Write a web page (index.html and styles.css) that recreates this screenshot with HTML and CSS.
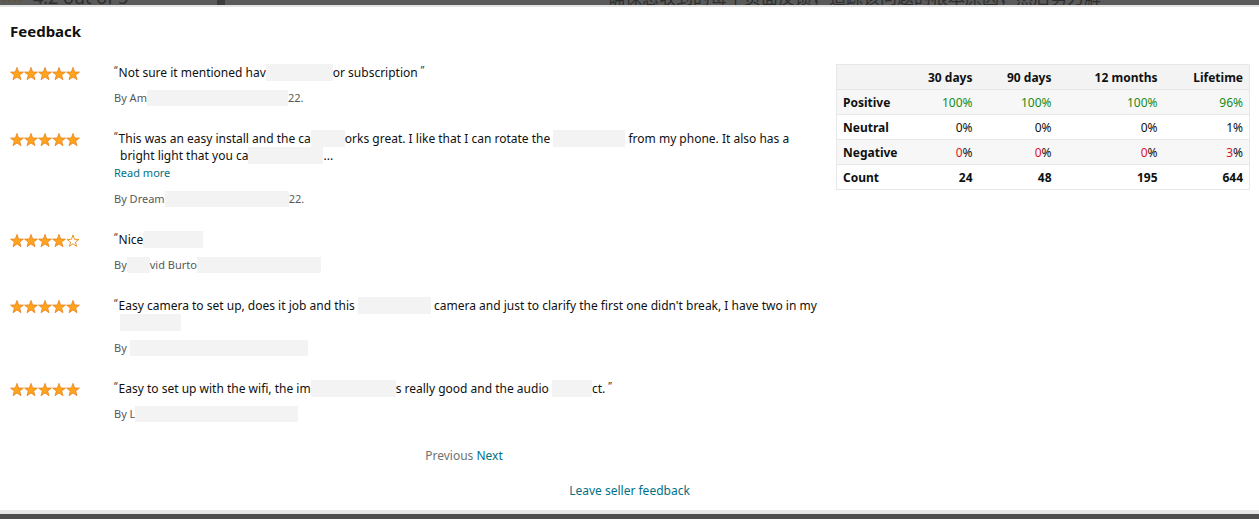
FILE: index.html
```html
<!DOCTYPE html>
<html lang="en">
<head>
<meta charset="utf-8">
<title>Feedback</title>
<link rel="stylesheet" href="styles.css">
</head>
<body>
<svg class="defs" width="0" height="0" aria-hidden="true">
  <defs>
    <symbol id="star-full" viewBox="0 0 14 13">
      <polygon points="7,0.4 8.65,4.93 13.47,5.1 9.66,8.07 11,12.7 7,10 3,12.7 4.34,8.07 0.53,5.1 5.35,4.93" fill="#ffa41c" stroke="#e47911" stroke-width="0.7" stroke-linejoin="round"/>
    </symbol>
    <symbol id="star-empty" viewBox="0 0 14 13">
      <polygon points="7,0.9 8.5,5.3 13,5.45 9.35,8.15 10.6,12.3 7,9.75 3.4,12.3 4.65,8.15 1,5.45 5.5,5.3" fill="#fff" stroke="#e88a14" stroke-width="0.9" stroke-linejoin="round"/>
    </symbol>
  </defs>
</svg>

<div class="bg-top">
  <div class="bg-top-inner">
    <span class="bg-stars">★★</span>
    <span class="bg-rating">4.2 out of 5</span>
    <span class="bg-box"></span>
    <span class="bg-cn">确保您收到的每个页面反馈，追踪该问题的根本原因，然后努力解</span>
  </div>
</div>

<div class="modal">
  <h2 class="title">Feedback</h2>
  <div class="content">
    <div class="reviews">
      <div class="review">
        <div class="stars">
          <svg width="70" height="13" viewBox="0 0 70 13"><use href="#star-full" x="0" width="14" height="13"/><use href="#star-full" x="14" width="14" height="13"/><use href="#star-full" x="28" width="14" height="13"/><use href="#star-full" x="42" width="14" height="13"/><use href="#star-full" x="56" width="14" height="13"/></svg>
        </div>
        <div class="body">
          <p class="text"><span class="q">“</span>Not sure it mentioned hav<span class="blur w67"></span>or subscription <span class="q">”</span></p>
          <p class="by">By Am<span class="blur w141"></span>22.</p>
        </div>
      </div>

      <div class="review">
        <div class="stars">
          <svg width="70" height="13" viewBox="0 0 70 13"><use href="#star-full" x="0" width="14" height="13"/><use href="#star-full" x="14" width="14" height="13"/><use href="#star-full" x="28" width="14" height="13"/><use href="#star-full" x="42" width="14" height="13"/><use href="#star-full" x="56" width="14" height="13"/></svg>
        </div>
        <div class="body">
          <p class="text"><span class="q">“</span>This was an easy install and the ca<span class="blur w34"></span>orks great. I like that I can rotate the <span class="blur w72"></span> from my phone. It also has a<br><span class="indent">bright light that you ca<span class="blur w75"></span>...</span></p>
          <a class="more" href="#">Read more</a>
          <p class="by">By Dream<span class="blur w124"></span>22.</p>
        </div>
      </div>

      <div class="review">
        <div class="stars">
          <svg width="70" height="13" viewBox="0 0 70 13"><use href="#star-full" x="0" width="14" height="13"/><use href="#star-full" x="14" width="14" height="13"/><use href="#star-full" x="28" width="14" height="13"/><use href="#star-full" x="42" width="14" height="13"/><use href="#star-empty" x="56" width="14" height="13"/></svg>
        </div>
        <div class="body">
          <p class="text"><span class="q">“</span>Nice<span class="blur w60"></span></p>
          <p class="by">By<span class="blur w23"></span>vid Burto<span class="blur w124"></span></p>
        </div>
      </div>

      <div class="review">
        <div class="stars">
          <svg width="70" height="13" viewBox="0 0 70 13"><use href="#star-full" x="0" width="14" height="13"/><use href="#star-full" x="14" width="14" height="13"/><use href="#star-full" x="28" width="14" height="13"/><use href="#star-full" x="42" width="14" height="13"/><use href="#star-full" x="56" width="14" height="13"/></svg>
        </div>
        <div class="body">
          <p class="text"><span class="q">“</span>Easy camera to set up, does it job and this <span class="blur w73"></span> camera and just to clarify the first one didn't break, I have two in my<br><span class="indent"><span class="blur w61"></span></span></p>
          <p class="by">By <span class="blur w178"></span></p>
        </div>
      </div>

      <div class="review">
        <div class="stars">
          <svg width="70" height="13" viewBox="0 0 70 13"><use href="#star-full" x="0" width="14" height="13"/><use href="#star-full" x="14" width="14" height="13"/><use href="#star-full" x="28" width="14" height="13"/><use href="#star-full" x="42" width="14" height="13"/><use href="#star-full" x="56" width="14" height="13"/></svg>
        </div>
        <div class="body">
          <p class="text"><span class="q">“</span>Easy to set up with the wifi, the im<span class="blur w85"></span>s really good and the audio <span class="blur w40"></span>ct. <span class="q">”</span></p>
          <p class="by">By L<span class="blur w163"></span></p>
        </div>
      </div>

      <div class="pager"><span class="prev">Previous</span> <a class="next" href="#">Next</a></div>
    </div>

    <table class="stats">
      <colgroup>
        <col class="c1"><col class="c2"><col class="c3"><col class="c4"><col class="c5">
      </colgroup>
      <thead>
        <tr><th></th><th>30 days</th><th>90 days</th><th>12 months</th><th>Lifetime</th></tr>
      </thead>
      <tbody>
        <tr class="alt"><td class="lbl">Positive</td><td><span class="pos">100%</span></td><td><span class="pos">100%</span></td><td><span class="pos">100%</span></td><td><span class="pos">96%</span></td></tr>
        <tr><td class="lbl">Neutral</td><td>0%</td><td>0%</td><td>0%</td><td>1%</td></tr>
        <tr class="alt"><td class="lbl">Negative</td><td><span class="neg">0</span>%</td><td><span class="neg">0</span>%</td><td><span class="neg">0</span>%</td><td><span class="neg">3</span>%</td></tr>
        <tr><td class="lbl">Count</td><td class="cnt">24</td><td class="cnt">48</td><td class="cnt">195</td><td class="cnt">644</td></tr>
      </tbody>
    </table>
  </div>
  <div class="leave"><a href="#">Leave seller feedback</a></div>
</div>

<div class="bg-bottom"></div>
</body>
</html>
```

FILE: styles.css
```css
* { box-sizing: border-box; }

html, body {
  margin: 0;
  padding: 0;
}

body {
  height: 519px;
  overflow: hidden;
  display: flex;
  flex-direction: column;
  background: #525252;
  font-family: "Noto Sans", "Liberation Sans", sans-serif;
  color: #0f1111;
}

.defs {
  position: absolute;
  width: 0;
  height: 0;
}

.bg-top {
  flex: none;
  height: 5px;
  overflow: hidden;
  background: #5a5a5a;
}

.bg-top-inner {
  display: flex;
  align-items: flex-end;
  height: 22px;
  margin-top: -15px;
  white-space: nowrap;
  color: #2e2e2e;
  font-size: 18px;
  line-height: 20px;
}

.bg-stars {
  color: #6a4a1a;
  font-size: 14px;
  letter-spacing: -2px;
  width: 30px;
}

.bg-rating {
  width: 187px;
  padding-left: 3px;
}

.bg-box {
  display: inline-block;
  width: 8px;
  height: 22px;
  background: #3c3c3c;
  margin-right: 383px;
}

.bg-cn {
  font-family: "Noto Sans CJK SC", sans-serif;
  font-size: 17px;
}

.modal {
  flex: none;
  height: 509px;
  overflow: hidden;
  background: #fff;
  border-top: 2px solid #e4e4e4;
  border-bottom: 4px solid #e7e7e7;
  padding: 14px 10px 0;
}

.title {
  margin: 0;
  font-size: 15px;
  line-height: 20px;
  font-weight: 700;
  color: #0f1111;
}

.content {
  display: flex;
  align-items: flex-start;
  gap: 22px;
  margin-top: 23px;
}

.reviews {
  width: 804px;
  flex: none;
}

.review {
  display: flex;
  margin-bottom: 24px;
}

.stars {
  width: 104px;
  flex: none;
  padding-top: 3px;
}

.stars svg {
  display: block;
}

.body {
  width: 700px;
}

.text {
  margin: 0;
  font-size: 12px;
  line-height: 17px;
  white-space: nowrap;
  color: #0f1111;
}

.q {
  font-size: 10px;
  vertical-align: top;
  line-height: 12px;
  color: #333;
  margin-right: 1px;
}

.indent {
  padding-left: 6px;
}

.blur {
  display: inline-block;
  height: 17px;
  vertical-align: top;
  background: #f3f3f3;
}

.by .blur {
  height: 16px;
  vertical-align: top;
}

.w23 { width: 23px; }
.w34 { width: 34px; }
.w40 { width: 40px; }
.w60 { width: 60px; }
.w61 { width: 61px; }
.w67 { width: 67px; }
.w72 { width: 72px; }
.w73 { width: 73px; }
.w75 { width: 75px; }
.w85 { width: 85px; }
.w124 { width: 124px; }
.w141 { width: 141px; }
.w163 { width: 163px; }
.w178 { width: 178px; }

.more {
  display: block;
  font-size: 11px;
  line-height: 18px;
  color: #007185;
  text-decoration: none;
}

.by {
  margin: 9px 0 0;
  font-size: 11px;
  line-height: 16px;
  color: #565959;
}

.pager {
  margin: 26px 0 0 104px;
  width: 700px;
  text-align: center;
  font-size: 12px;
  line-height: 16px;
}

.prev {
  color: #6f7373;
}

.next {
  color: #007185;
  text-decoration: none;
}

.leave {
  margin-top: 19px;
  text-align: center;
  font-size: 12px;
  line-height: 16px;
}

.leave a {
  color: #007185;
  text-decoration: none;
}

.stats {
  flex: none;
  width: 413px;
  border-collapse: collapse;
  table-layout: fixed;
  border: 1px solid #e7e7e7;
  font-size: 12px;
  color: #0f1111;
}

.c1 { width: 80px; }
.c2 { width: 62px; }
.c3 { width: 79px; }
.c4 { width: 106px; }
.c5 { width: 86px; }

.stats th,
.stats td {
  height: 25px;
  padding: 0 6px;
  text-align: right;
  border-bottom: 1px solid #e7e7e7;
  white-space: nowrap;
}

.stats thead tr {
  background: #f3f3f3;
}

.stats th {
  font-weight: 700;
}

.stats tr.alt {
  background: #f7f7f7;
}

.stats td.lbl {
  text-align: left;
  font-weight: 700;
}

.stats td.cnt {
  font-weight: 700;
}

.pos {
  color: #178a17;
}

.neg {
  color: #e0101f;
}

.bg-bottom {
  flex: none;
  height: 5px;
  background: #4f4f4f;
}
```
